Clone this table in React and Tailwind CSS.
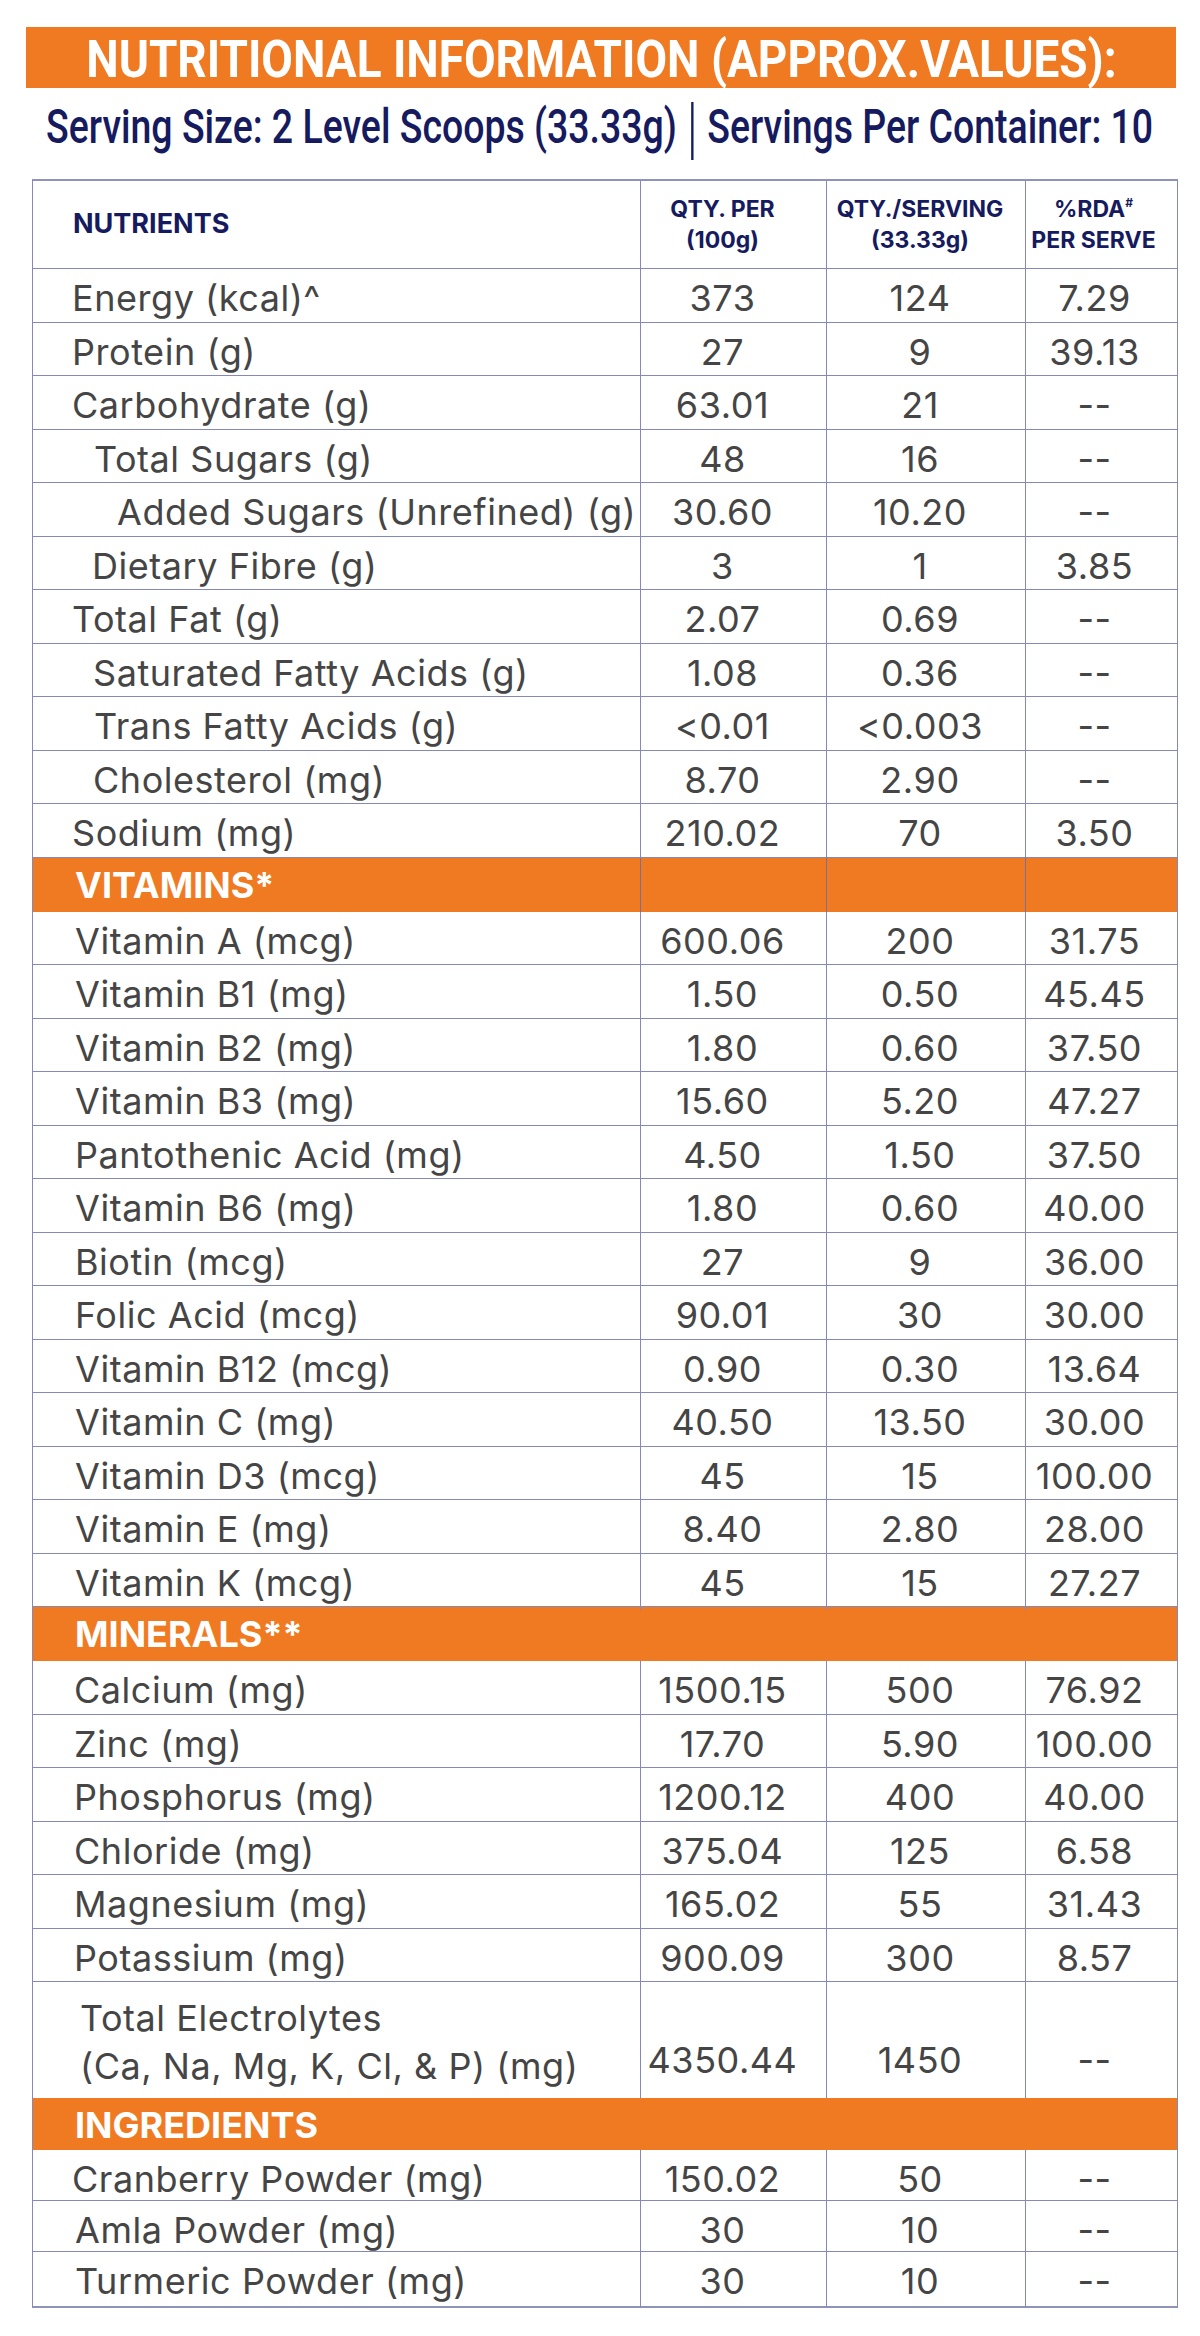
const nutrients = [
  { label: 'Energy (kcal)^', a: '373', b: '124', c: '7.29', pl: 'pl-[39px]' },
  { label: 'Protein (g)', a: '27', b: '9', c: '39.13', pl: 'pl-[39px]' },
  { label: 'Carbohydrate (g)', a: '63.01', b: '21', c: '--', pl: 'pl-[39px]' },
  { label: 'Total Sugars (g)', a: '48', b: '16', c: '--', pl: 'pl-[61px]' },
  { label: 'Added Sugars (Unrefined) (g)', a: '30.60', b: '10.20', c: '--', pl: 'pl-[84px]' },
  { label: 'Dietary Fibre (g)', a: '3', b: '1', c: '3.85', pl: 'pl-[59px]' },
  { label: 'Total Fat (g)', a: '2.07', b: '0.69', c: '--', pl: 'pl-[39px]' },
  { label: 'Saturated Fatty Acids (g)', a: '1.08', b: '0.36', c: '--', pl: 'pl-[60px]' },
  { label: 'Trans Fatty Acids (g)', a: '<0.01', b: '<0.003', c: '--', pl: 'pl-[61px]' },
  { label: 'Cholesterol (mg)', a: '8.70', b: '2.90', c: '--', pl: 'pl-[60px]' },
  { label: 'Sodium (mg)', a: '210.02', b: '70', c: '3.50', pl: 'pl-[39px]' },
];

const vitamins = [
  ['Vitamin A (mcg)', '600.06', '200', '31.75'],
  ['Vitamin B1 (mg)', '1.50', '0.50', '45.45'],
  ['Vitamin B2 (mg)', '1.80', '0.60', '37.50'],
  ['Vitamin B3 (mg)', '15.60', '5.20', '47.27'],
  ['Pantothenic Acid (mg)', '4.50', '1.50', '37.50'],
  ['Vitamin B6 (mg)', '1.80', '0.60', '40.00'],
  ['Biotin (mcg)', '27', '9', '36.00'],
  ['Folic Acid (mcg)', '90.01', '30', '30.00'],
  ['Vitamin B12 (mcg)', '0.90', '0.30', '13.64'],
  ['Vitamin C (mg)', '40.50', '13.50', '30.00'],
  ['Vitamin D3 (mcg)', '45', '15', '100.00'],
  ['Vitamin E (mg)', '8.40', '2.80', '28.00'],
  ['Vitamin K (mcg)', '45', '15', '27.27'],
];

const minerals = [
  ['Calcium (mg)', '1500.15', '500', '76.92'],
  ['Zinc (mg)', '17.70', '5.90', '100.00'],
  ['Phosphorus (mg)', '1200.12', '400', '40.00'],
  ['Chloride (mg)', '375.04', '125', '6.58'],
  ['Magnesium (mg)', '165.02', '55', '31.43'],
  ['Potassium (mg)', '900.09', '300', '8.57'],
];

const ingredients = [
  { label: 'Cranberry Powder (mg)', a: '150.02', b: '50', c: '--', pl: 'pl-[39px]', h: 'h-[51px]' },
  { label: 'Amla Powder (mg)', a: '30', b: '10', c: '--', pl: 'pl-[42px]', h: 'h-[51px]' },
  { label: 'Turmeric Powder (mg)', a: '30', b: '10', c: '--', pl: 'pl-[42px]', h: 'h-[54px]' },
];

const line = 'border-[#8489b9]';

function Row({ label, a, b, c, pl, h = 'h-[53.5px]' }) {
  return (
    <div className={`grid grid-cols-[608px_186px_199px_151px] ${h} border-b ${line} text-[36px] tracking-[0.015em] text-[#454545]`}>
      <div className={`flex items-center border-r ${line} ${pl} pt-[2px] whitespace-nowrap`}>{label}</div>
      <div className={`flex items-center justify-center border-r ${line} pr-[22px] pt-[2px]`}>{a}</div>
      <div className={`flex items-center justify-center border-r ${line} pr-[12px] pt-[2px]`}>{b}</div>
      <div className="flex items-center justify-center pr-[14px] pt-[2px]">{c}</div>
    </div>
  );
}

function Section({ title, h, dividers }) {
  return (
    <div className={`grid grid-cols-[608px_186px_199px_151px] ${h} bg-[#f07a21] text-white`}>
      <div className={`flex items-center pl-[42px] text-[36px] font-bold ${dividers ? 'border-r border-[#7b6f9a]' : ''}`}>{title}</div>
      <div className={dividers ? 'border-r border-[#7b6f9a]' : ''} />
      <div className={dividers ? 'border-r border-[#7b6f9a]' : ''} />
      <div />
    </div>
  );
}

export default function App() {
  return (
    <div className="w-[1200px] min-h-[2336px] bg-white pt-[27px] font-['Inter',sans-serif]">
      {/* Title */}
      <div className="ml-[26px] w-[1150px] h-[61px] bg-[#f07a21] flex items-center justify-center overflow-hidden">
        <h1 className="inline-block whitespace-nowrap scale-x-[0.9] font-['Roboto',sans-serif] font-bold text-[51px] leading-none text-white pt-[3px]">
          NUTRITIONAL INFORMATION (APPROX.VALUES):
        </h1>
      </div>

      {/* Serving line */}
      <div className="h-[91px] flex items-center justify-center pb-[14px]">
        <div className="flex items-center whitespace-nowrap scale-x-[0.78] font-['Roboto',sans-serif] font-medium text-[48px] leading-none text-[#161a5e]">
          <span>Serving Size: 2 Level Scoops (33.33g)</span>
          <span className="mx-[18px] w-[3px] h-[58px] bg-[#161a5e] mt-[8px]" />
          <span>Servings Per Container: 10</span>
        </div>
      </div>

      {/* Table */}
      <div className={`ml-[32px] w-[1146px] border ${line} border-b-2 border-t-2 border-t-[#8f93b8] border-b-[#8f93b8]`}>
        <div className={`grid grid-cols-[608px_186px_199px_151px] h-[88px] border-b ${line} text-[#161a5e] font-bold`}>
          <div className={`flex items-center pl-[40px] border-r ${line} text-[27px]`}>NUTRIENTS</div>
          <div className={`flex flex-col items-center justify-center border-r ${line} pr-[22px] text-[23px] leading-[31px]`}>
            <span>QTY. PER</span>
            <span>(100g)</span>
          </div>
          <div className={`flex flex-col items-center justify-center border-r ${line} pr-[12px] text-[23px] leading-[31px]`}>
            <span>QTY./SERVING</span>
            <span>(33.33g)</span>
          </div>
          <div className="flex flex-col items-center justify-center pr-[16px] text-[23px] leading-[31px]">
            <span>%RDA<sup className="text-[12px] top-[-10px] relative align-baseline">#</sup></span>
            <span>PER SERVE</span>
          </div>
        </div>

        {nutrients.map((r) => (
          <Row key={r.label} {...r} />
        ))}

        <Section title="VITAMINS*" h="h-[54px]" dividers />
        {vitamins.map(([label, a, b, c]) => (
          <Row key={label} label={label} a={a} b={b} c={c} pl="pl-[42px]" />
        ))}

        <Section title="MINERALS**" h="h-[54px]" />
        {minerals.map(([label, a, b, c]) => (
          <Row key={label} label={label} a={a} b={b} c={c} pl="pl-[41px]" />
        ))}

        {/* Total electrolytes: values sit on the second line */}
        <div className="grid grid-cols-[608px_186px_199px_151px] h-[116px] text-[36px] tracking-[0.015em] text-[#454545] leading-[48px]">
          <div className={`flex flex-col justify-center border-r ${line} pl-[47px] pt-[4px] whitespace-nowrap`}>
            <span>Total Electrolytes</span>
            <span>(Ca, Na, Mg, K, Cl, &amp; P) (mg)</span>
          </div>
          <div className={`flex items-end justify-center border-r ${line} pr-[22px] pb-[14px]`}>4350.44</div>
          <div className={`flex items-end justify-center border-r ${line} pr-[12px] pb-[14px]`}>1450</div>
          <div className="flex items-end justify-center pr-[14px] pb-[14px]">--</div>
        </div>

        <Section title="INGREDIENTS" h="h-[52px]" />
        {ingredients.map((r, i) => (
          <Row key={r.label} {...r} h={i === ingredients.length - 1 ? 'h-[54px] !border-b-0' : r.h} />
        ))}
      </div>
    </div>
  );
}
